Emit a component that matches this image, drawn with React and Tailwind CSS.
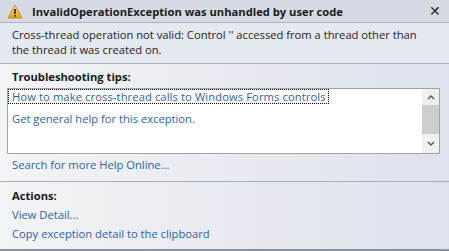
import React from 'react';

const font = { fontFamily: '"Open Sans", "Noto Sans", sans-serif' };

const Warning = () => (
  <svg width="16" height="15" viewBox="0 0 16 15" className="shrink-0">
    <defs>
      <linearGradient id="wg" x1="0" y1="0" x2="0" y2="1">
        <stop offset="0" stopColor="#fde68a" />
        <stop offset="1" stopColor="#e5a50a" />
      </linearGradient>
    </defs>
    <path d="M8 1 L15 14 L1 14 Z" fill="url(#wg)" stroke="#b7860b" strokeWidth="0.8" strokeLinejoin="round" />
    <rect x="7.2" y="5" width="1.6" height="5" fill="#222" />
    <rect x="7.2" y="11" width="1.6" height="1.6" fill="#222" />
  </svg>
);

const Link = ({ children, className = '' }) => (
  <span className={`text-[#2f62a8] cursor-pointer hover:underline ${className}`}>{children}</span>
);

export default function App() {
  return (
    <div className="w-[449px] h-[251px] flex flex-col overflow-hidden text-[11.2px] leading-[15px] text-[#1e1e1e] bg-gradient-to-r from-[#f3f4f6] to-[#dde2eb]" style={font}>
      <div className="h-[23px] shrink-0 flex items-center pl-[7px] pr-[8px] bg-[#d5dae3] border-b border-[#aeb5c0]">
        <Warning />
        <span className="ml-[9px] font-bold text-[11.2px] text-[#1b1b1b]">InvalidOperationException was unhandled by user code</span>
        <span className="ml-auto text-[14px] leading-none text-[#2a2a2a]">✕</span>
      </div>
      <div className="h-[41px] shrink-0 px-[12px] pt-[4px] bg-[#e4e8ef] border-b border-[#aeb2ba]">
        <p>Cross-thread operation not valid: Control '' accessed from a thread other than</p>
        <p>the thread it was created on.</p>
      </div>
      <div className="flex flex-col px-[7px] pt-[5px]">
        <div className="pl-[5px] font-bold text-[#1a1a1a]">Troubleshooting tips:</div>
        <div className="mt-[4px] h-[66px] mr-[2px] flex bg-white border border-[#a3a3a3]">
          <div className="flex-1 flex flex-col">
            <div className="self-start border border-dotted border-black pl-[3px] pr-[2px] h-[15px] leading-[13px]">
              <Link className="tracking-[0.1px]">How to make cross-thread calls to Windows Forms controls</Link>
            </div>
            <div className="pl-[4px] mt-[7px]">
              <Link>Get general help for this exception.</Link>
            </div>
          </div>
          <div className="w-[17px] flex flex-col items-center bg-[#f0f0f0]">
            <div className="h-[16px] flex items-center justify-center">
              <svg width="8" height="5" viewBox="0 0 8 5"><path d="M1 4 L4 1 L7 4" fill="none" stroke="#555" strokeWidth="1.4" /></svg>
            </div>
            <div className="w-full h-[29px] bg-[#cdcdcd]" />
            <div className="flex-1 flex items-center justify-center">
              <svg width="8" height="5" viewBox="0 0 8 5"><path d="M1 1 L4 4 L7 1" fill="none" stroke="#555" strokeWidth="1.4" /></svg>
            </div>
          </div>
        </div>
        <div className="pl-[5px] mt-[3px]">
          <Link>Search for more Help Online...</Link>
        </div>
      </div>
      <div className="mt-[9px] border-t border-[#a8aeb8]" />
      <div className="flex flex-col px-[12px] pt-[6px] gap-[4px]">
        <div className="font-bold text-[#1a1a1a]">Actions:</div>
        <Link>View Detail...</Link>
        <Link>Copy exception detail to the clipboard</Link>
      </div>
      <div className="mt-auto h-[2px] bg-[#8a929e]" />
    </div>
  );
}
